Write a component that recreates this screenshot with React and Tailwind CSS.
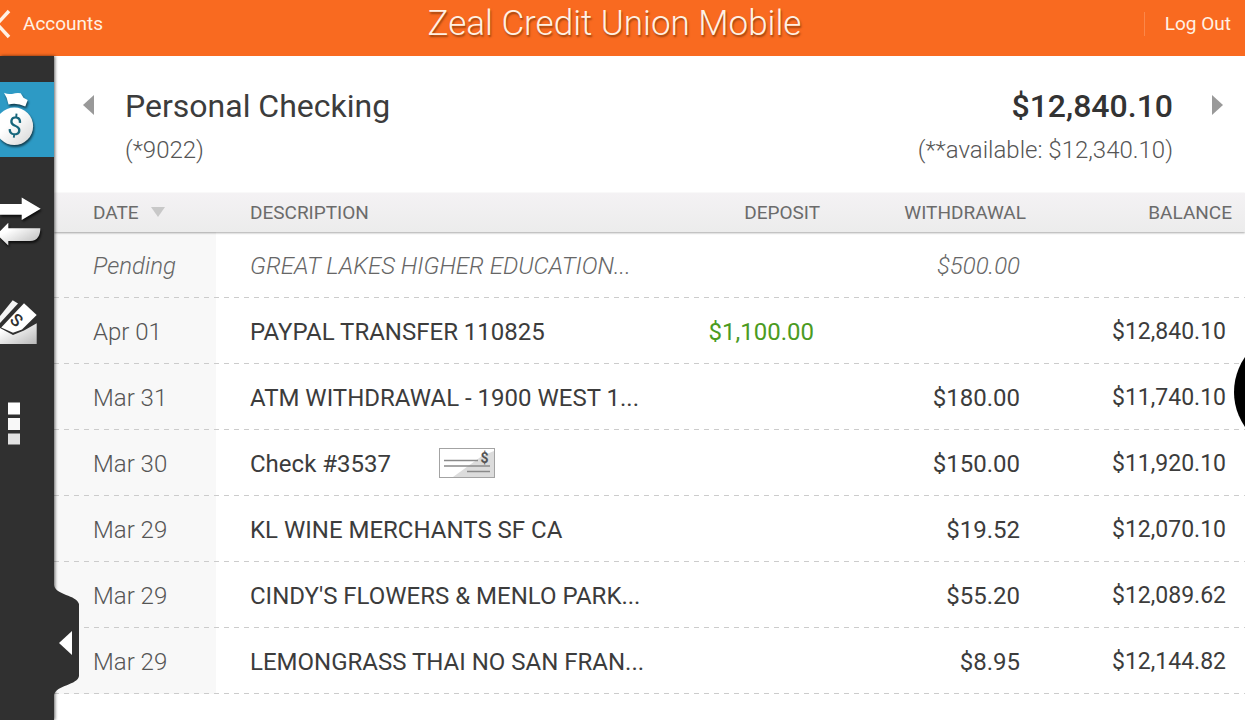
import React, { useState } from 'react';
import clsx from 'clsx';

const transactions = [
  { id: 1, date: 'Pending', description: 'GREAT LAKES HIGHER EDUCATION...', withdrawal: '$500.00', pending: true },
  { id: 2, date: 'Apr 01', description: 'PAYPAL TRANSFER 110825', deposit: '$1,100.00', balance: '$12,840.10' },
  { id: 3, date: 'Mar 31', description: 'ATM WITHDRAWAL - 1900 WEST 1...', withdrawal: '$180.00', balance: '$11,740.10' },
  { id: 4, date: 'Mar 30', description: 'Check #3537', withdrawal: '$150.00', balance: '$11,920.10', check: true },
  { id: 5, date: 'Mar 29', description: 'KL WINE MERCHANTS SF CA', withdrawal: '$19.52', balance: '$12,070.10' },
  { id: 6, date: 'Mar 29', description: "CINDY'S FLOWERS & MENLO PARK...", withdrawal: '$55.20', balance: '$12,089.62' },
  { id: 7, date: 'Mar 29', description: 'LEMONGRASS THAI NO SAN FRAN...', withdrawal: '$8.95', balance: '$12,144.82' },
];

function MoneyBagIcon() {
  return (
    <svg viewBox="0 0 54 75" className="w-full h-full drop-shadow-[1px_2px_1px_rgba(0,0,0,0.6)]" aria-hidden="true">
      <defs>
        <linearGradient id="bag" x1="0" y1="0" x2="1" y2="1">
          <stop offset="0.4" stopColor="#fff" />
          <stop offset="1" stopColor="#d4d4d4" />
        </linearGradient>
      </defs>
      <path d="M4 10.7Q6 12 12 12Q17 10.5 20.7 11.3L23.5 15.7L27.7 18L25.3 24.5Q17 20.5 8.5 22.5Q7.5 16 4 10.7Z" fill="#fff" />
      <circle cx="14.3" cy="44.3" r="18.8" fill="url(#bag)" />
      <text x="15" y="53" fontSize="26" textAnchor="middle" transform="rotate(6 15 44)" fill="#17667c" fontFamily="Roboto, sans-serif">$</text>
    </svg>
  );
}

function TransferIcon() {
  return (
    <svg viewBox="0 0 54 75" className="w-full h-full drop-shadow-[1px_2px_1px_rgba(0,0,0,0.7)]" aria-hidden="true">
      <defs>
        <linearGradient id="arrow" x1="0" y1="0" x2="1" y2="1">
          <stop offset="0.3" stopColor="#fff" />
          <stop offset="1" stopColor="#b5b5b5" />
        </linearGradient>
      </defs>
      <path d="M-4 21H21.7V14.5L40.7 25.7L21.7 37V31.7H-4Z" fill="#fff" />
      <path d="M-3 51.5L8.3 39.7V45.3H40.3C40.3 52 38 58 30 58H8.3V62.5Z" fill="url(#arrow)" />
    </svg>
  );
}

function DepositIcon() {
  return (
    <svg viewBox="0 0 54 75" className="w-full h-full" aria-hidden="true">
      <defs>
        <linearGradient id="envelope" x1="0" y1="0" x2="1" y2="1">
          <stop offset="0.2" stopColor="#fff" />
          <stop offset="1" stopColor="#b8b8b8" />
        </linearGradient>
      </defs>
      <path d="M0 44L13 51L24 46.5L36.7 39.3V60H0Z" fill="url(#envelope)" />
      <path d="M12.7 16.3L18 19.5L0 39V32Z" fill="#f4f4f4" />
      <path d="M24 19.3L36.7 31L22 45.5L13 48.7L1.2 43.5Z" fill="#fff" />
      <text x="16.5" y="42" fontSize="17" fontWeight="500" textAnchor="middle" transform="rotate(42 16.5 36)" fill="#303030" fontFamily="Roboto, sans-serif">S</text>
    </svg>
  );
}

function MoreIcon() {
  return (
    <svg viewBox="0 0 54 75" className="w-full h-full" aria-hidden="true">
      <rect x="8" y="17.5" width="12" height="12" fill="#fff" />
      <rect x="8" y="33" width="12" height="12" fill="#f8f8f8" />
      <rect x="8" y="48.5" width="12" height="11" fill="#e2e2e2" />
    </svg>
  );
}

function CheckIcon() {
  return (
    <svg viewBox="0 0 56 30" className="w-14 h-[30px]" aria-hidden="true">
      <rect x="0.5" y="0.5" width="55" height="29" fill="#fff" stroke="#a3a3a3" />
      <path d="M14 29L43 8L55 3V29Z" fill="#dcdcdc" />
      <path d="M5 12.5H39M5 18H51M28 23.5H51" stroke="#8a8a8a" strokeWidth="1.5" />
      <text x="45.5" y="14.5" fontSize="14" fontWeight="700" textAnchor="middle" fill="#555" fontFamily="Roboto, sans-serif">$</text>
    </svg>
  );
}

const navItems = [
  { id: 'accounts', label: 'Accounts', icon: MoneyBagIcon },
  { id: 'transfer', label: 'Transfer', icon: TransferIcon },
  { id: 'deposit', label: 'Deposit', icon: DepositIcon },
  { id: 'more', label: 'More', icon: MoreIcon },
];

function Header() {
  return (
    <header className="flex items-center h-14 shrink-0 pb-2 bg-[#f96a20] text-[#fff1e4] [text-shadow:1px_2px_2px_rgba(90,40,0,0.6)]">
      <div className="w-32">
        <button className="flex items-center gap-3 text-[19px] leading-6">
          <svg viewBox="0 0 11 30" className="w-[11px] h-[30px]" aria-hidden="true">
            <path d="M9 2L-3 15L9 28" fill="none" stroke="#fff1e4" strokeWidth="3.5" />
          </svg>
          Accounts
        </button>
      </div>
      <h1 className="flex-1 text-center text-[35px] leading-10 font-light">Zeal Credit Union Mobile</h1>
      <div className="flex justify-end w-36 pr-[14px]">
        <button className="h-6 pl-5 border-l border-[#fb8749] text-[19px] leading-6">Log Out</button>
      </div>
    </header>
  );
}

function Sidebar({ active, onSelect }) {
  return (
    <aside className="relative z-10 w-[54px] shrink-0 bg-[#303030] shadow-[1px_0_3px_rgba(0,0,0,0.6)]">
      <nav className="flex flex-col gap-[26px] pt-[26px]">
        {navItems.map(({ id, label, icon: Icon }) => (
          <button
            key={id}
            aria-label={label}
            onClick={() => onSelect(id)}
            className={clsx('h-[75px] w-full overflow-hidden', active === id && 'bg-[#2d9ac5]')}
          >
            <Icon />
          </button>
        ))}
      </nav>
      {/* collapse handle sticks out over the list */}
      <button aria-label="Collapse menu" className="absolute left-full bottom-6 w-[25px] h-28">
        <svg viewBox="0 0 25 112" className="w-full h-full" aria-hidden="true">
          <path d="M-1 1H0C1 11 23 11 25 20V92C24 101 2 101 0 111H-1Z" fill="#303030" />
          <path d="M5 59L18 47V71Z" fill="#fff" />
        </svg>
      </button>
    </aside>
  );
}

function AccountSummary() {
  return (
    <section className="flex items-start pt-[30px] pb-[27px] pl-[29px] pr-[22px]">
      <button aria-label="Previous account" className="mt-2">
        <svg viewBox="0 0 11 22" className="w-[11px] h-[22px]" aria-hidden="true">
          <path d="M0 11L11 1V21Z" fill="#999" />
        </svg>
      </button>
      <div className="flex flex-col gap-2 pl-[31px] flex-1">
        <h2 className="text-[32px] leading-10 text-[#3c3c3c]">Personal Checking</h2>
        <p className="text-2xl font-light text-[#555]">(*9022)</p>
      </div>
      <div className="flex flex-col gap-2 pr-[39px] text-right">
        <p className="text-[32px] leading-10 font-medium text-[#333]">$12,840.10</p>
        <p className="text-2xl font-light text-[#555]">(**available: $12,340.10)</p>
      </div>
      <button aria-label="Next account" className="mt-2">
        <svg viewBox="0 0 11 22" className="w-[11px] h-[22px]" aria-hidden="true">
          <path d="M11 11L0 1V21Z" fill="#999" />
        </svg>
      </button>
    </section>
  );
}

function TransactionRow({ item }) {
  const tone = item.pending ? 'italic font-light text-[#666]' : 'text-[#3c3c3c]';
  return (
    <tr className="h-[66px] bg-no-repeat bg-[image:repeating-linear-gradient(90deg,#ccc_0_5px,transparent_5px_10px),linear-gradient(#f8f8f8,#f8f8f8)] bg-[size:100%_1px,162px_100%] bg-[position:0_100%,0_0]">
      <td className={clsx('pt-0.5 pl-[39px] font-light', item.pending ? 'italic text-[#666]' : 'text-[#555]')}>{item.date}</td>
      <td className={clsx('pt-0.5 pl-[34px] whitespace-nowrap', tone)}>
        <div className="flex items-start gap-12">
          {item.description}
          {item.check && <CheckIcon />}
        </div>
      </td>
      <td className="pt-0.5 pr-[19px] text-right text-[#4b9b22]">{item.deposit}</td>
      <td className={clsx('pt-0.5 pr-[19px] text-right', tone)}>{item.withdrawal}</td>
      <td className="pt-0.5 pr-[19px] text-right text-[23px] text-[#3c3c3c]">{item.balance}</td>
    </tr>
  );
}

function TransactionTable() {
  return (
    <table className="w-full table-fixed text-2xl">
      <thead className="relative">
        <tr className="h-[39px] bg-linear-to-b from-[#f4f2f4] to-[#ececec] shadow-[0_1px_2px_rgba(0,0,0,0.35)] text-[19px] text-[#6b6b6b]">
          <th className="w-[162px] pl-[39px] text-left font-normal">
            <button className="flex items-center gap-3">
              DATE
              <svg viewBox="0 0 14 10" className="w-3.5 h-2.5" aria-hidden="true">
                <path d="M0 0H14L7 10Z" fill="#c8c8c8" />
              </svg>
            </button>
          </th>
          <th className="pl-[34px] text-left font-normal">DESCRIPTION</th>
          <th className="w-[140px] pr-[13px] text-right font-normal">DEPOSIT</th>
          <th className="w-[206px] pr-[13px] text-right font-normal">WITHDRAWAL</th>
          <th className="w-[206px] pr-[13px] text-right font-normal">BALANCE</th>
        </tr>
      </thead>
      <tbody>
        {transactions.map((item) => (
          <TransactionRow key={item.id} item={item} />
        ))}
      </tbody>
    </table>
  );
}

function App() {
  const [active, setActive] = useState('accounts');

  return (
    <div className="relative flex flex-col h-screen overflow-hidden bg-white font-['Roboto',sans-serif]">
      <Header />
      <div className="flex flex-1 min-h-0">
        <Sidebar active={active} onSelect={setActive} />
        <main className="flex-1 min-w-0 overflow-hidden">
          <AccountSummary />
          <TransactionTable />
        </main>
      </div>
      <div className="absolute z-20 top-[331px] right-[-111px] size-[122px] rounded-full bg-black"></div>
    </div>
  );
}

export default App;
